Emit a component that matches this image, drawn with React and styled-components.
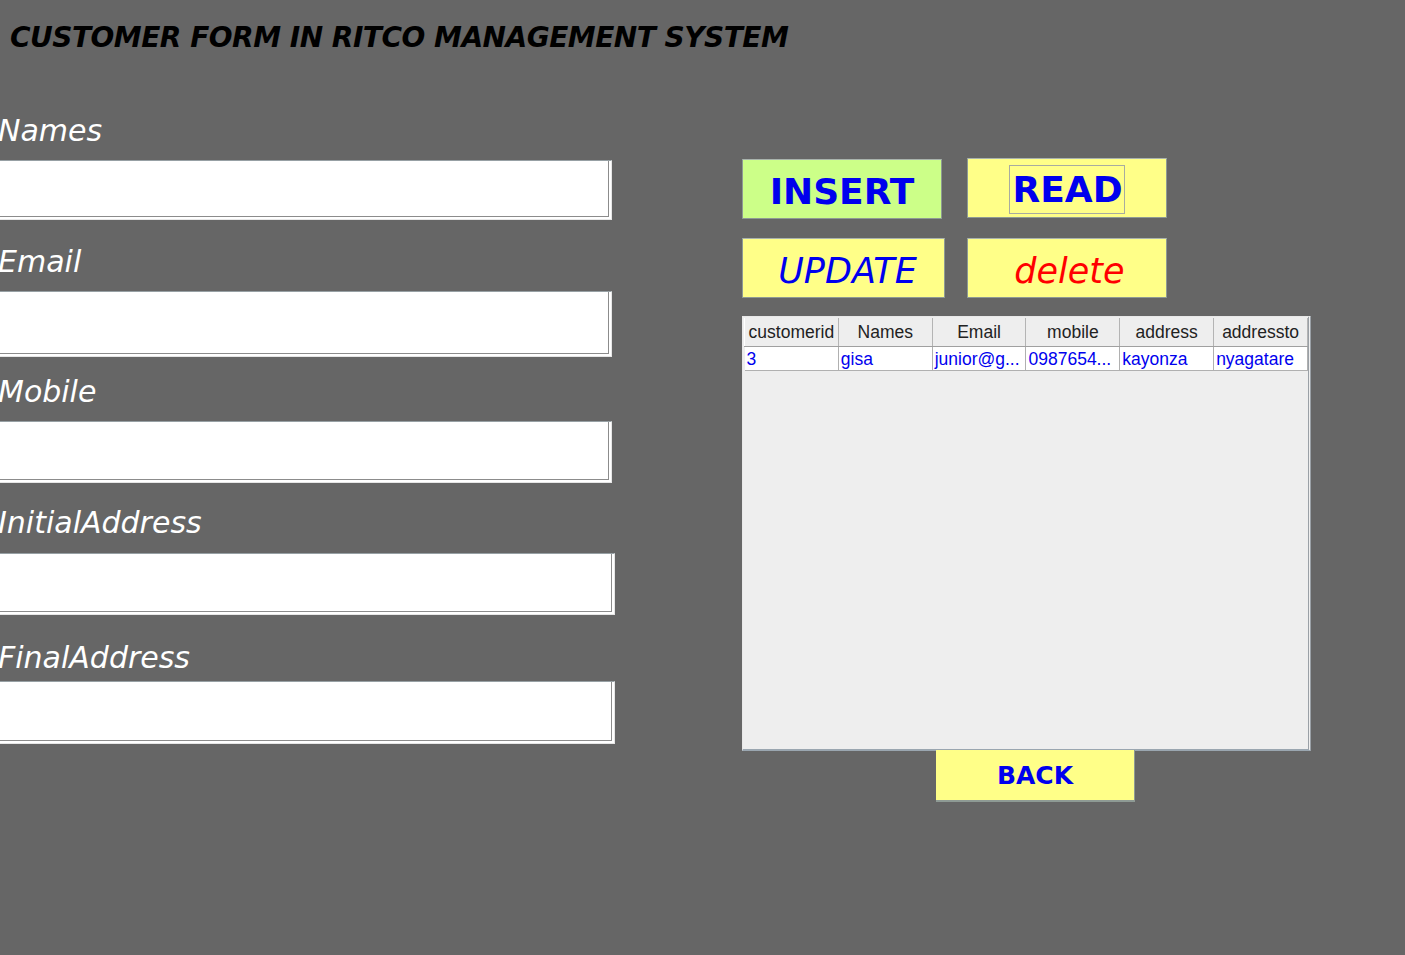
import styled, { createGlobalStyle } from "styled-components"

const GlobalStyle = createGlobalStyle`
    html, body {
        margin: 0;
        padding: 0;
        background: #666666;
    }
    body {
        min-height: 955px;
        font-family: "DejaVu Sans", Verdana, sans-serif;
    }
`

const fields = [
    { label: "Names", gapTop: 0, h: 60, w: 612 },
    { label: "Email", gapTop: 24, h: 66, w: 612 },
    { label: "Mobile", gapTop: 17, h: 62, w: 612 },
    { label: "InitialAddress", gapTop: 22, h: 62, w: 615, labelGap: 12 },
    { label: "FinalAddress", gapTop: 25, h: 63, w: 615, labelGap: 5 },
]

const columns = ["customerid", "Names", "Email", "mobile", "address", "addressto"]
const rows = [["3", "gisa", "junior@g...", "0987654...", "kayonza", "nyagatare"]]

const App = () => {
    return (
        <Page>
            <GlobalStyle />
            <Title>CUSTOMER FORM IN RITCO MANAGEMENT SYSTEM</Title>
            <Main>
                <FormColumn>
                    {fields.map(f => (
                        <Field key={f.label} $gapTop={f.gapTop}>
                            <Label $gap={f.labelGap ?? 11}>{f.label}</Label>
                            <Input $h={f.h} $w={f.w} />
                        </Field>
                    ))}
                </FormColumn>
                <ActionColumn>
                    <ButtonRow $gap={25} $after={19}>
                        <Button $bg="#ccff88" $bold>INSERT</Button>
                        <Button $bold $offset={-1}><Focus>READ</Focus></Button>
                    </ButtonRow>
                    <ButtonRow $gap={22} $after={18}>
                        <Button $italic $w={203} $shift={8}>UPDATE</Button>
                        <Button $italic $color="#ff0000" $shift={5}>delete</Button>
                    </ButtonRow>
                    <TableBox>
                        <Table>
                            <thead>
                                <tr>
                                    {columns.map(c => <Th key={c}>{c}</Th>)}
                                </tr>
                            </thead>
                            <tbody>
                                {rows.map((r, i) => (
                                    <tr key={i}>
                                        {r.map((v, j) => <Td key={j}>{v}</Td>)}
                                    </tr>
                                ))}
                            </tbody>
                        </Table>
                    </TableBox>
                    <BackRow>
                        <BackButton>BACK</BackButton>
                    </BackRow>
                </ActionColumn>
            </Main>
        </Page>
    )
}

const Page = styled.div`
    display: flex;
    flex-direction: column;
`

const Title = styled.h1`
    margin: 0;
    padding: 21px 0 0 10px;
    height: 32px;
    line-height: 34px;
    font-size: 28px;
    font-weight: bold;
    font-style: italic;
    color: #000;
    white-space: nowrap;
    letter-spacing: -0.5px;
`

const Main = styled.div`
    display: flex;
    align-items: flex-start;
`

const FormColumn = styled.div`
    display: flex;
    flex-direction: column;
    width: 615px;
    margin-top: 60px;
`

const Field = styled.div`
    display: flex;
    flex-direction: column;
    margin-top: ${p => p.$gapTop}px;
`

const Label = styled.label`
    height: 36px;
    line-height: 36px;
    font-size: 30px;
    font-style: italic;
    color: #ffffff;
    margin-bottom: ${p => p.$gap}px;
    margin-left: -2px;
    white-space: nowrap;
`

const Input = styled.input`
    box-sizing: border-box;
    width: ${p => p.$w}px;
    height: ${p => p.$h}px;
    margin: 0;
    padding: 0 6px;
    background: #ffffff;
    border: none;
    border-top: 1px solid #97a0a4;
    border-right: 1px solid #e6e6e6;
    border-bottom: 1px solid #e6e6e6;
    box-shadow: inset -2px -2px 0 #ffffff, inset -3px -3px 0 #8c8c8c;
    outline: none;
    font-size: 20px;
`

const ActionColumn = styled.div`
    display: flex;
    flex-direction: column;
    margin-top: 106px;
    margin-left: 127px;
    width: 568px;
`

const ButtonRow = styled.div`
    display: flex;
    gap: ${p => p.$gap}px;
    align-items: flex-start;
    margin-bottom: ${p => p.$after}px;
`

const Button = styled.button`
    box-sizing: border-box;
    width: ${p => p.$w || 200}px;
    height: 60px;
    margin-top: ${p => p.$offset || 0}px;
    padding: 5px 0 0 ${p => p.$shift || 0}px;
    background: ${p => p.$bg || "#ffff88"};
    border: 1px solid #8e9a94;
    border-top-color: #a9b3ad;
    color: ${p => p.$color || "#0000ee"};
    font-family: "DejaVu Sans", Verdana, sans-serif;
    font-size: ${p => p.$bold ? 36 : 35}px;
    font-weight: ${p => p.$bold ? "bold" : "normal"};
    font-style: ${p => p.$italic ? "italic" : "normal"};
    display: flex;
    align-items: center;
    justify-content: center;
    cursor: pointer;
`

const Focus = styled.span`
    display: flex;
    align-items: center;
    justify-content: center;
    box-sizing: border-box;
    padding: 0 1px 0 2px;
    margin-top: -3px;
    height: 49px;
    border: 1px solid #a8aca0;
`

const TableBox = styled.div`
    box-sizing: border-box;
    width: 569px;
    height: 435px;
    background: #eeeeee;
    border: 1px solid #e8e8e8;
    border-right: 3px double #9aa0a6;
    border-bottom: 2px solid #9aa6b0;
    padding: 1px 0 0 1px;
`

const Table = styled.table`
    border-collapse: collapse;
    table-layout: fixed;
    width: 564px;
    font-family: "Liberation Sans", Arial, sans-serif;
    font-size: 17.5px;
`

const Th = styled.th`
    height: 28px;
    padding: 0 2px;
    background: #eeeeee;
    color: #222;
    font-weight: normal;
    text-align: center;
    border-right: 1px solid #b4b4b4;
    border-bottom: 1px solid #a0a0a0;
    border-left: 1px solid #ffffff;
    white-space: nowrap;
    overflow: hidden;
`

const Td = styled.td`
    height: 23px;
    padding: 0 2px;
    background: #ffffff;
    color: #0000ee;
    border-right: 1px solid #b0b0b0;
    border-bottom: 1px solid #b0b0b0;
    white-space: nowrap;
    overflow: hidden;
    line-height: 22px;
`

const BackRow = styled.div`
    display: flex;
    padding-left: 194px;
`

const BackButton = styled.button`
    box-sizing: border-box;
    width: 199px;
    height: 52px;
    margin-top: -1px;
    padding: 0;
    background: #ffff88;
    border: none;
    border-right: 1px solid #8e9a94;
    border-bottom: 2px solid #8e9a94;
    color: #0000ee;
    font-family: "DejaVu Sans", Verdana, sans-serif;
    font-size: 25px;
    font-weight: bold;
    cursor: pointer;
`

export default App
